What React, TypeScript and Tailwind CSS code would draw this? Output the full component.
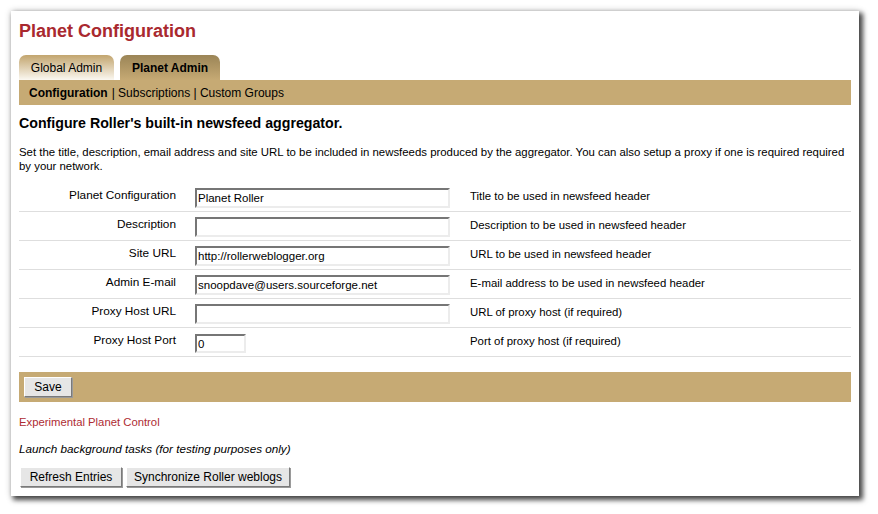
import React from 'react'

type Field = {
  label: string
  value: string
  help: string
  short?: boolean
}

const fields: Field[] = [
  { label: 'Planet Configuration', value: 'Planet Roller', help: 'Title to be used in newsfeed header' },
  { label: 'Description', value: '', help: 'Description to be used in newsfeed header' },
  { label: 'Site URL', value: 'http://rollerweblogger.org', help: 'URL to be used in newsfeed header' },
  { label: 'Admin E-mail', value: 'snoopdave@users.sourceforge.net', help: 'E-mail address to be used in newsfeed header' },
  { label: 'Proxy Host URL', value: '', help: 'URL of proxy host (if required)' },
  { label: 'Proxy Host Port', value: '0', help: 'Port of proxy host (if required)', short: true },
]

const btn =
  'h-[20px] bg-[#e6e6e6] border border-t-white border-l-white border-r-[#7a7a7a] border-b-[#7a7a7a] shadow-[1px_1px_0_#9a9a9a] text-[12px] leading-[18px] text-black'

function FormRow({ f }: { f: Field }) {
  return (
    <div className="flex h-[29px] border-b border-[#dedede]">
      <div className="w-[157px] pt-[5px] text-right leading-[15px] text-[11.8px]">{f.label}</div>
      <div className="ml-[19px] w-[275px] pt-[5px]">
        <div
          className={
            (f.short ? 'w-[51px] mt-[1px] h-[19px] ' : 'w-[255px] h-[20px] ') +
            'border-2 border-t-[#767676] border-l-[#767676] border-r-[#ececec] border-b-[#ececec] bg-white pl-[1px] leading-[16px] text-[11.5px]'
          }
        >
          {f.value}
        </div>
      </div>
      <div className="pt-[6px] leading-[15px] text-[11.4px]">{f.help}</div>
    </div>
  )
}

export default function App() {
  return (
    <div className="w-[878px] h-[514px] bg-white pl-[11px] pt-[11px] font-['Liberation_Sans',Arial,sans-serif] text-black">
      <div className="w-[848px] h-[485px] bg-white px-[8px] pt-[8px] shadow-[3px_3px_5px_1px_rgba(0,0,0,0.7),0_0_7px_rgba(0,0,0,0.18)]">
        {/* page title */}
        <h1 className="text-[18px] leading-[24px] font-bold text-[#a9292f]">Planet Configuration</h1>

        {/* tabs */}
        <div className="mt-[12px] flex gap-[6px] text-[12px]">
          <div className="w-[95px] h-[25px] rounded-t-[7px] bg-gradient-to-b from-[#c2a56e] to-[#fbf8f1] flex items-center justify-center">
            Global Admin
          </div>
          <div className="w-[100px] h-[25px] rounded-t-[7px] bg-gradient-to-b from-[#9b8557] to-[#c6aa74] flex items-center justify-center font-bold">
            Planet Admin
          </div>
        </div>
        <div className="h-[25px] bg-[#c6aa74] px-[10px] flex items-center text-[12px]">
          <span className="font-bold">Configuration</span>
          <span className="ml-[4px]">| Subscriptions | Custom Groups</span>
        </div>

        <h2 className="mt-[9px] text-[14.2px] leading-[18px] font-bold">Configure Roller's built-in newsfeed aggregator.</h2>
        <p className="mt-[13px] text-[11.4px] leading-[14px]">
          Set the title, description, email address and site URL to be included in newsfeeds produced by the aggregator. You can also setup a proxy if one is required required by your network.
        </p>

        {/* form */}
        <div className="mt-[10px]">
          {fields.map(f => (
            <FormRow key={f.label} f={f} />
          ))}
        </div>

        <div className="mt-[15px] h-[30px] bg-[#c6aa74] px-[5px] flex items-center">
          <button className={btn + ' w-[48px]'}>Save</button>
        </div>

        <div className="mt-[13px] text-[11.3px] leading-[15px] text-[#ae2c33]">Experimental Planet Control</div>
        <div className="mt-[11px] text-[11.7px] leading-[15px] italic">Launch background tasks (for testing purposes only)</div>

        <div className="mt-[11px] flex gap-[4px] pl-[1px]">
          <button className={btn + ' w-[102px]'}>Refresh Entries</button>
          <button className={btn + ' w-[164px]'}>Synchronize Roller weblogs</button>
        </div>
      </div>
    </div>
  )
}
